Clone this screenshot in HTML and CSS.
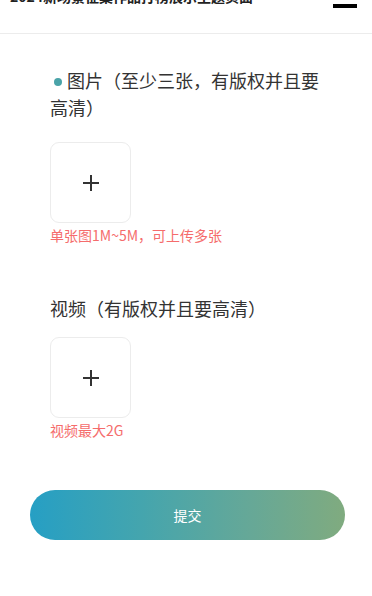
FILE: index.html
```html
<!DOCTYPE html>
<html lang="zh-CN">
<head>
<meta charset="utf-8">
<meta name="viewport" content="width=device-width, initial-scale=1">
<title>上传作品</title>
<link rel="stylesheet" href="styles.css">
</head>
<body>
<header class="header">
  <div class="header-title">2024新场景征集作品打榜展示主题页面</div>
  <div class="menu" aria-label="菜单">
    <span class="menu-bar"></span>
    <span class="menu-bar"></span>
    <span class="menu-bar"></span>
  </div>
</header>
<main class="form">
  <section class="field field-first">
    <div class="field-label"><span class="dot"></span>图片（至少三张，有版权并且要高清）</div>
    <div class="uploader">
      <svg class="plus" width="18" height="18" viewBox="0 0 18 18"><path d="M9 1v16M1 9h16" stroke="#333" stroke-width="2" fill="none"/></svg>
    </div>
    <div class="tip">单张图1M~5M，可上传多张</div>
  </section>
  <section class="field">
    <div class="field-label">视频（有版权并且要高清）</div>
    <div class="uploader uploader-video">
      <svg class="plus" width="18" height="18" viewBox="0 0 18 18"><path d="M9 1v16M1 9h16" stroke="#333" stroke-width="2" fill="none"/></svg>
    </div>
    <div class="tip">视频最大2G</div>
  </section>
</main>
<button class="submit" type="button">提交</button>
</body>
</html>
```
FILE: styles.css
```css
* { box-sizing: border-box; }
html, body { margin: 0; padding: 0; background: #fff; }
body {
  font-family: "Noto Sans CJK SC", "Noto Sans", "Liberation Sans", sans-serif;
  color: #333;
  overflow: hidden;
}
.header {
  margin-top: -14px;
  height: 48px;
  border-bottom: 1px solid #ececec;
  display: flex;
  justify-content: space-between;
  align-items: flex-start;
  padding: 0 15px 0 10px;
}
.header-title {
  font-size: 14px;
  line-height: 20px;
  font-weight: bold;
  color: #222;
  white-space: nowrap;
}
.menu {
  display: flex;
  flex-direction: column;
  gap: 5px;
  width: 24px;
}
.menu-bar {
  display: block;
  height: 4px;
  background: #000;
}
.form {
  padding: 0 50px;
}
.field-first { padding-top: 33px; }
.field { margin-bottom: 0; }
.field + .field { margin-top: 49px; }
.field-label {
  font-size: 18px;
  line-height: 27px;
  color: #333;
}
.dot {
  display: inline-block;
  width: 8px;
  height: 8px;
  border-radius: 50%;
  background: #4aa3a8;
  margin: 0 5px 0 4px;
  vertical-align: 2px;
}
.uploader {
  margin-top: 21px;
  width: 81px;
  height: 81px;
  border: 1px solid #ececec;
  border-radius: 9px;
  display: flex;
  align-items: center;
  justify-content: center;
  background: #fff;
}
.uploader-video { margin-top: 15px; }
.plus { display: block; }
.tip {
  margin-top: 1px;
  font-size: 14px;
  line-height: 22px;
  color: #f56c6c;
}
.submit {
  display: block;
  margin: 49px 0 0 30px;
  width: 315px;
  height: 50px;
  border: 0;
  border-radius: 25px;
  background: linear-gradient(90deg, #269fc4 0%, #44a5ae 35%, #66a897 70%, #80ab7f 100%);
  color: #fff;
  font-family: "Noto Sans CJK SC", "Noto Sans", sans-serif;
  font-size: 14px;
  padding: 0;
}
```
